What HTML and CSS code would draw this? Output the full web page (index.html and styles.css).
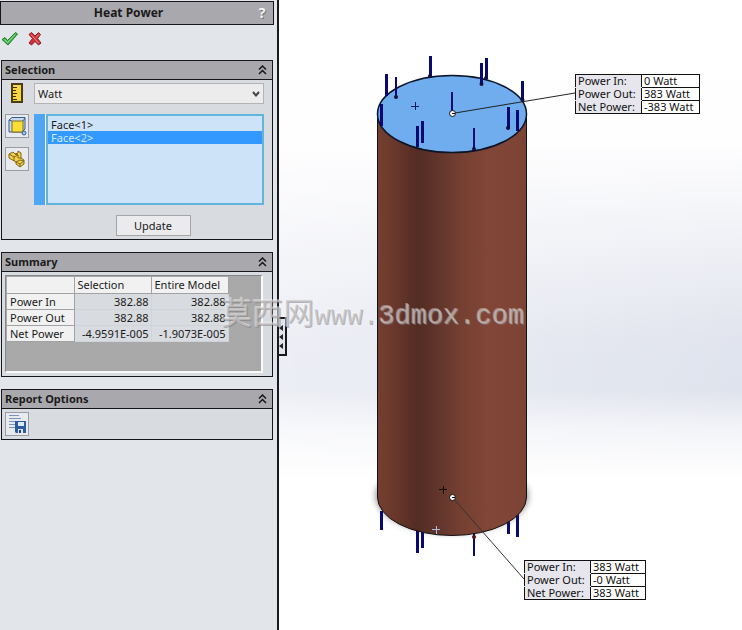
FILE: index.html
```html
<!DOCTYPE html>
<html lang="en">
<head>
    <meta charset="UTF-8">
    <meta name="viewport" content="width=device-width, initial-scale=1.0">
    <title>Heat Power</title>
    <link rel="stylesheet" href="styles.css">
</head>
<body>
    <aside class="sidebar">
        <header class="title-bar">
            <h1>Heat Power</h1>
            <button class="help" type="button" aria-label="Help">?</button>
        </header>

        <div class="actions">
            <button type="button" aria-label="OK">
                <svg width="18" height="16" viewBox="0 0 18 16">
                    <path d="M1 8.5 L4 6.5 L6.5 9.5 L14.5 1.5 L16.5 3 L7 14 Z" fill="#43b549" stroke="#1f7d2b" stroke-linejoin="round"/>
                    <path d="M3.5 8.5 L6.5 11.5 L14 3.5" fill="none" stroke="#9be28f"/>
                </svg>
            </button>
            <button type="button" aria-label="Cancel">
                <svg width="16" height="16" viewBox="0 0 16 16">
                    <path d="M2 3.5 L4.5 1.5 L8 5 L11.5 1.5 L13.5 3.5 L10.5 7.5 L14 12 L11.5 14 L8 10.5 L4.5 14 L2 12 L5.5 7.5 Z" fill="#cf3338" stroke="#8d1a20" stroke-linejoin="round"/>
                    <path d="M4 3.5 L11.5 12 M12 3.5 L9 6.5" fill="none" stroke="#ee8d8d"/>
                </svg>
            </button>
        </div>

        <!-- Selection -->
        <section class="panel">
            <h2 class="panel-header">Selection
                <svg class="chevron" width="9" height="10" viewBox="0 0 9 10"><path d="M1 4.5 L4.5 1 L8 4.5 M1 9 L4.5 5.5 L8 9"/></svg>
            </h2>
            <div class="panel-body selection">
                <svg class="ruler" width="12" height="20" viewBox="0 0 12 20">
                    <rect x="1" y="1" width="10" height="18" fill="#f8d63c" stroke="#4a3d14" stroke-width="2"/>
                    <path d="M2 4.5h4M2 7.5h3M2 10.5h4M2 13.5h3M2 16.5h4" stroke="#3a3010"/>
                </svg>
                <div class="units">
                    <select aria-label="Units">
                        <option>Watt</option>
                        <option>BTU/s</option>
                    </select>
                    <svg width="8" height="6" viewBox="0 0 8 6"><path d="M1 1 L4 4.5 L7 1" fill="none" stroke="#444" stroke-width="2"/></svg>
                </div>

                <div class="filters">
                    <button class="icon-button" type="button" aria-label="Select faces">
                        <svg width="20" height="20" viewBox="0 0 20 20" stroke-linejoin="round">
                            <path d="M2 4 L5 1.5 H18 V13 L15 16 H2 Z" fill="#c9d8ef" stroke="#345a92"/>
                            <rect x="5" y="5" width="11" height="11" fill="#f9df35" stroke="#7d6c19"/>
                            <path d="M2 4 L5 5 M16 5 L18 2" stroke="#345a92"/>
                            <circle cx="17" cy="17" r="2" fill="#a9c3ea" stroke="#345a92"/>
                        </svg>
                    </button>
                    <button class="icon-button" type="button" aria-label="Select components">
                        <svg width="20" height="20" viewBox="0 0 20 20" stroke="#80651a" stroke-linejoin="round">
                            <path d="M2 5 L6 3 L8 5 L11 4 V2 L14 4 V9 L17 11 V15 L13 18 L9 15 V13 L2 9 Z" fill="#f3d24a"/>
                            <path d="M2 5 L7 8 L11 6 L8 5 M7 8 V12 M11 6 V9 L14 9 M9 13 L13 11 L17 12 M9 13 L13 15 V18 M13 15 L17 12" fill="none"/>
                        </svg>
                    </button>
                </div>
                <div class="face-list">
                    <select multiple size="5" aria-label="Selected faces">
                        <option>Face&lt;1&gt;</option>
                        <option selected>Face&lt;2&gt;</option>
                    </select>
                </div>

                <button class="update" type="button">Update</button>
            </div>
        </section>

        <!-- Summary -->
        <section class="panel">
            <h2 class="panel-header">Summary
                <svg class="chevron" width="9" height="10" viewBox="0 0 9 10"><path d="M1 4.5 L4.5 1 L8 4.5 M1 9 L4.5 5.5 L8 9"/></svg>
            </h2>
            <div class="panel-body">
                <div class="grid-frame">
                    <table class="summary">
                        <thead>
                            <tr><th></th><th scope="col">Selection</th><th scope="col">Entire Model</th></tr>
                        </thead>
                        <tbody>
                            <tr><th scope="row">Power In</th><td>382.88</td><td>382.88</td></tr>
                            <tr><th scope="row">Power Out</th><td>382.88</td><td>382.88</td></tr>
                            <tr><th scope="row">Net Power</th><td>-4.9591E-005</td><td>-1.9073E-005</td></tr>
                        </tbody>
                    </table>
                </div>
            </div>
        </section>

        <!-- Report options -->
        <section class="panel">
            <h2 class="panel-header">Report Options
                <svg class="chevron" width="9" height="10" viewBox="0 0 9 10"><path d="M1 4.5 L4.5 1 L8 4.5 M1 9 L4.5 5.5 L8 9"/></svg>
            </h2>
            <div class="panel-body">
                <button class="icon-button" type="button" aria-label="Save report">
                    <svg width="20" height="20" viewBox="0 0 20 20">
                        <path d="M2 1.5h10M2 4.5h12M2 7.5h7M2 10.5h6M2 13.5h6" stroke="#7795c0"/>
                        <path d="M8 7h11v12H9l-1-1z" fill="#2d5c9e"/>
                        <path d="M11 8h6v4h-6z" fill="#dce8f6"/>
                        <path d="M11 15h5v4h-5z" fill="#dce8f6"/>
                        <path d="M12 16h2v3h-2z" fill="#1f4377"/>
                    </svg>
                </button>
            </div>
        </section>
    </aside>

    <main class="viewport">
        <svg class="model" width="463" height="630" viewBox="0 0 463 630">
            <defs>
                <linearGradient id="copper">
                    <stop offset="0" stop-color="#743f31"/>
                    <stop offset="0.1" stop-color="#6b392c"/>
                    <stop offset="0.27" stop-color="#532c23"/>
                    <stop offset="0.4" stop-color="#61342a"/>
                    <stop offset="0.55" stop-color="#743f31"/>
                    <stop offset="0.75" stop-color="#824637"/>
                    <stop offset="1" stop-color="#7c4334"/>
                </linearGradient>
                <filter id="soft" x="-20%" y="-20%" width="140%" height="140%">
                    <feGaussianBlur stdDeviation="3"/>
                </filter>
            </defs>

            <ellipse cx="173" cy="496" rx="76" ry="37" fill="#888" filter="url(#soft)"/>

            <!-- heat flux arrows leaving the bottom face -->
            <g stroke="#0a0a6e" stroke-width="3">
                <path d="M102.5 511V530M138.5 528V553M143.5 528V548M229.5 520V534M238.5 514V537"/>
                <path d="M195 532V556" stroke-width="2"/>
            </g>

            <path d="M98.5 114V497A74.5 38.5 0 0 0 247.5 497V114Z" fill="url(#copper)" stroke="#111"/>
            <ellipse cx="173" cy="114" rx="74.5" ry="38.5" fill="#6fadee" stroke="#0c1428" stroke-width="1.5"/>

            <g stroke="#0a0a6e" stroke-width="3">
                <path d="M107.5 74V96M151.5 56V77M202.5 63V85M207.5 58V79M243.5 81V101"/>
                <path d="M102.5 104V126M138.5 126V147M143.5 121V143M229.5 107V129M238.5 110V131"/>
                <path d="M117 77V98M173 92V112M195 128V150" stroke-width="2"/>
            </g>
            <g fill="#160c40">
                <circle cx="117" cy="97" r="2"/>
                <circle cx="151" cy="76" r="2"/>
                <circle cx="202.5" cy="84" r="2"/>
                <circle cx="207" cy="78" r="2"/>
                <circle cx="243.5" cy="100" r="2"/>
                <circle cx="195" cy="149" r="2"/>
                <circle cx="229" cy="128" r="2"/>
                <circle cx="195" cy="537" r="2" fill="#5c1219"/>
            </g>

            <!-- leaders -->
            <path d="M176 113L296 93" stroke="#222"/>
            <path d="M174 498L245 579" stroke="#333"/>
            <path d="M132 106.5h8M136.5 102v8" stroke="#0b1a55"/>
            <path d="M160 489.5h8M164.5 486v8" stroke="#160b0b"/>
            <path d="M153 529.5h8M157.5 526v8" stroke="#a9bce0"/>
            <g fill="#fff" stroke="#111">
                <circle cx="173.5" cy="113.5" r="3"/>
                <circle cx="173.5" cy="497.5" r="3"/>
                <path d="M173 113.5h3M173 497.5h3"/>
            </g>
        </svg>

        <button class="flyout" type="button" aria-label="Collapse panel">
            <svg width="4" height="24" viewBox="0 0 4 24"><path d="M4 0v6L0 3zM4 9v6L0 12zM4 18v6L0 21z" fill="#222"/></svg>
        </button>

        <table class="callout callout-top">
            <tr><th scope="row">Power In:</th><td>0 Watt</td></tr>
            <tr><th scope="row">Power Out:</th><td>383 Watt</td></tr>
            <tr><th scope="row">Net Power:</th><td>-383 Watt</td></tr>
        </table>
        <table class="callout callout-bottom">
            <tr><th scope="row">Power In:</th><td>383 Watt</td></tr>
            <tr><th scope="row">Power Out:</th><td>-0 Watt</td></tr>
            <tr><th scope="row">Net Power:</th><td>383 Watt</td></tr>
        </table>
    </main>

    <p class="watermark"><span lang="zh">莫西网</span>www.3dmox.com</p>
</body>
</html>
```

FILE: styles.css
```css
* {
    box-sizing: border-box;
}

body {
    position: relative;
    margin: 0;
    display: flex;
    min-height: 100vh;
    font-family: "Noto Sans", "Open Sans", sans-serif;
    font-size: 11px;
    line-height: 16px;
    color: #1a1a1a;
}

button,
select {
    font: inherit;
    color: inherit;
    margin: 0;
    padding: 0;
}

svg {
    display: block;
}

/* Property manager */
.sidebar {
    flex: 0 0 279px;
    display: flex;
    flex-direction: column;
    gap: 12px;
    padding: 1px 3px 0 1px;
    background-color: #e2e5e9;
    border-right: 2px solid #1a1a1e;
}

.title-bar {
    display: flex;
    align-items: center;
    height: 24px;
    margin-left: -1px;
    padding: 0 5px 0 0;
    background-color: #a9a9ad;
    border: 1px solid #16161c;
}

h1 {
    flex: 1;
    margin: 0;
    font-size: 12px;
    text-align: center;
}

.help {
    width: 12px;
    border: 0;
    background: none;
    color: #f4f4f4;
    font-size: 14px;
    font-weight: bold;
    text-shadow: 1px 1px 0 #777;
}

.actions {
    display: flex;
    gap: 8px;
    height: 17px;
    margin-top: -6px;
}

.actions button {
    height: 16px;
    border: 0;
    background: none;
}

.panel {
    margin-right: 1px;
    border: 1px solid #16161c;
    background-color: #d8dbdf;
}

.panel-header {
    display: flex;
    align-items: center;
    justify-content: space-between;
    height: 19px;
    margin: 0;
    padding: 0 5px 0 3px;
    background-color: #a9a9ad;
    border-bottom: 1px solid #16161c;
    font-size: 11px;
}

.chevron {
    fill: none;
    stroke: #16161c;
    stroke-width: 1.5;
}

.panel-body {
    padding: 3px;
}

.icon-button {
    display: grid;
    place-items: center;
    width: 24px;
    height: 24px;
    background-color: #e8eaee;
    border: 1px solid #9a9ca4;
}

/* Selection */
.selection {
    display: grid;
    grid-template-columns: 24px 1fr;
    column-gap: 5px;
    row-gap: 10px;
    padding-right: 0;
}

.ruler {
    justify-self: center;
}

.units {
    position: relative;
    height: 21px;
    margin-right: 8px;
}

.units select {
    appearance: none;
    width: 100%;
    height: 21px;
    padding: 0 3px;
    border: 1px solid #b4b4b8;
    border-radius: 0;
    background-color: #ececec;
}

.units svg {
    position: absolute;
    right: 4px;
    top: 8px;
    pointer-events: none;
}

.filters {
    display: grid;
    gap: 9px;
    align-content: start;
}

.face-list {
    display: flex;
    height: 91px;
    margin-right: 8px;
    border-left: 11px solid #4fa6f5;
    background-color: #f4fbff;
    padding-left: 1px;
}

.face-list select {
    flex: 1;
    appearance: none;
    height: 91px;
    padding: 2px 0;
    overflow: hidden;
    border: 2px solid #62b4dc;
    border-radius: 0;
    background-color: #cde4f8;
    outline: 0;
}

.face-list option {
    display: flex;
    align-items: center;
    height: 13px;
    min-height: 0;
    padding: 0 3px;
}

.face-list option:checked {
    color: #cfeaff;
    background: linear-gradient(#3399ff, #3399ff);
}

.update {
    grid-column: 2;
    justify-self: center;
    width: 75px;
    height: 21px;
    border: 1px solid #a5a5aa;
    background-color: #ebebee;
}

/* Summary */
.grid-frame {
    height: 98px;
    margin-right: 6px;
    padding: 1px;
    background-color: #a9a9a9;
    border: 1px solid #85858a;
    border-right: 2px solid #fafafa;
    border-bottom: 2px solid #fafafa;
}

.summary {
    border-collapse: collapse;
    line-height: 15px;
}

.summary th,
.summary td {
    height: 16px;
    padding: 0 2px 0 3px;
    border-right: 1px solid #a2a2a6;
    border-bottom: 1px solid #a2a2a6;
}

.summary th {
    min-width: 67px;
    background-color: #f1f1f1;
    font-weight: normal;
    text-align: left;
}

.summary thead th + th {
    width: 77px;
}

.summary td {
    background-color: #d8dbdf;
    border-color: #d0d3d7;
    text-align: right;
}

/* Model view */
.viewport {
    position: relative;
    flex: 1;
    min-height: 630px;
    overflow: hidden;
    background:
        linear-gradient(to right, rgba(255, 255, 255, 0.4), transparent),
        linear-gradient(#fff 0, #fefeff 140px, #f0f1f6 240px, #e1e4ee 340px, #dfe3ed 390px, #f3f4f8 430px, #fff 480px);
}

.flyout {
    position: absolute;
    left: -2px;
    top: 317px;
    width: 10px;
    height: 39px;
    padding-left: 2px;
    background-color: #e2e5e9;
    border: 2px solid #1a1a1e;
    border-left: 0;
}

.callout {
    position: absolute;
    border-collapse: collapse;
    color: #111;
    line-height: 12px;
}

.callout th,
.callout td {
    height: 13px;
    padding: 0 6px 0 2px;
    border: 1px solid #111;
    background-color: #fff;
    font-weight: normal;
    text-align: left;
    white-space: nowrap;
}

.callout th {
    width: 66px;
    padding-right: 4px;
    border-top-color: #e6e6ec;
    border-bottom-color: #e6e6ec;
    background-color: #e6e6ec;
}

.callout tr:first-child th {
    border-top-color: #111;
}

.callout tr:last-child th {
    border-bottom-color: #111;
}

.callout-top {
    left: 296px;
    top: 74px;
}

.callout-bottom {
    left: 245px;
    top: 560px;
}

.watermark {
    position: absolute;
    left: 221px;
    top: 298px;
    margin: 0;
    color: rgba(205, 200, 200, 0.6);
    font: 27px/36px "Liberation Mono", "Noto Sans CJK SC", monospace;
    text-shadow: 1px 1px 0 rgba(120, 120, 125, 0.5), -1px -1px 0 rgba(255, 255, 255, 0.4);
    white-space: nowrap;
    pointer-events: none;
}

.watermark span {
    font-size: 31px;
}
```
